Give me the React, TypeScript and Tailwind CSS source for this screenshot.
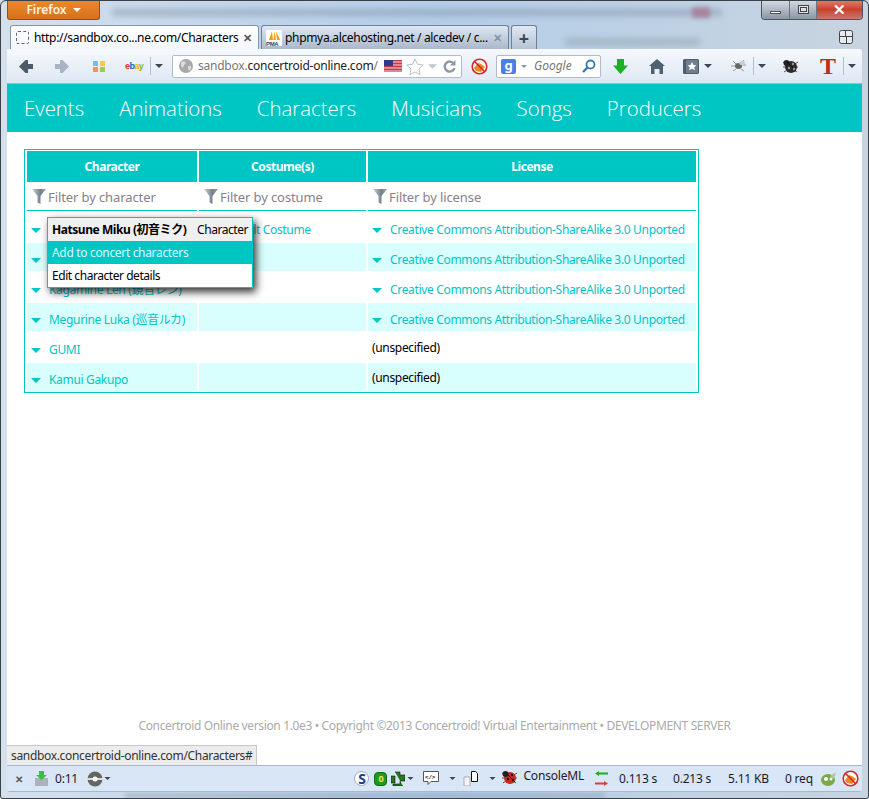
import React from "react";

const Caret = ({ c = "#3c4654", w = 9, h = 5 }: { c?: string; w?: number; h?: number }) => (
  <svg width={w} height={h} viewBox="0 0 10 5" className="shrink-0 block"><path d="M0 0h10L5 5z" fill={c} /></svg>
);

const Filter = () => (
  <svg width="14" height="15" viewBox="0 0 14 15" className="shrink-0 block">
    <defs><linearGradient id="fg" x1="0" x2="1" y1="0" y2="0"><stop offset="0" stopColor="#c9d3d8" /><stop offset="0.6" stopColor="#76808a" /><stop offset="1" stopColor="#9aa4ac" /></linearGradient></defs>
    <path d="M0 0h14L8.5 7v8l-3-1.5V7z" fill="url(#fg)" />
  </svg>
);

const Arrow = ({ c, flip }: { c: string; flip?: boolean }) => (
  <svg width="14" height="13" viewBox="0 0 14 13" className="block" style={flip ? { transform: "scaleX(-1)" } : undefined}>
    <path d="M0 6.5L6.5 0h2.500v4h5v5h-5v4H6.500z" fill={c} />
  </svg>
);

const Ladybug = ({ red }: { red?: boolean }) => (
  <svg width="17" height="15" viewBox="0 0 17 15" className="block">
    <path d="M1 3l3 2M1 8h3M2 13l3-2M16 3l-3 2M16 8h-3M15 13l-3-2" stroke="#555" strokeWidth="1" />
    <ellipse cx="9" cy="8" rx="6" ry="6" fill={red ? "#c8281e" : "#2c2c2c"} />
    <circle cx="4.500" cy="4" r="3" fill="#222" />
    <path d="M5 3l9 9" stroke="#111" strokeWidth="1" />
    <circle cx="11" cy="5" r="1.200" fill={red ? "#200" : "#999"} />
    <circle cx="7" cy="9" r="1.200" fill={red ? "#200" : "#999"} />
    <circle cx="12" cy="10" r="1.200" fill={red ? "#200" : "#999"} />
  </svg>
);

const NoScript = () => (
  <svg width="17" height="17" viewBox="0 0 17 17" className="block">
    <circle cx="8.500" cy="8.500" r="7.300" fill="#fff" stroke="#d8252b" strokeWidth="1.600" />
    <path d="M3 10l4-5 3 1 4 3-4 5-5-1z" fill="#e88b1e" />
    <path d="M3.300 3.300l10.400 10.400" stroke="#d8252b" strokeWidth="1.600" />
  </svg>
);

const Sep = () => <div className="w-px h-[18px] bg-[#b4bfcc]" />;

const rows = [
  { name: "Hatsune Miku (初音ミク)", costume: "Default Costume", license: true },
  { name: "Kagamine Rin (鏡音リン)", costume: "", license: true },
  { name: "Kagamine Len (鏡音レン)", costume: "", license: true },
  { name: "Megurine Luka (巡音ルカ)", costume: "", license: true },
  { name: "GUMI", costume: "", license: false },
  { name: "Kamui Gakupo", costume: "", license: false },
];

const font = { fontFamily: '"Noto Sans", "Noto Sans CJK JP", sans-serif' };

const tealCaret = <Caret c="#00c6c6" w={10} h={5} />;

export default function App() {
  return (
    <div
      className="relative w-[869px] h-[799px] overflow-hidden flex flex-col bg-gradient-to-r from-[#d4e0ec] via-[#b4cee9] to-[#c8d4e0] text-black"
      style={font}
    >
      {/* blurred desktop behind aero glass */}
      <div className="absolute left-[112px] top-[9px] w-[610px] h-[7px] bg-[#7d8ea6] opacity-50 blur-[3px]" />
      <div className="absolute left-[692px] top-[7px] w-[18px] h-[11px] bg-[#a4708c] opacity-70 blur-[2px]" />
      <div className="absolute left-[565px] top-[38px] w-[135px] h-[8px] bg-[#88a0a8] opacity-50 blur-[3px]" />
      <div className="absolute left-[125px] bottom-[2px] w-[480px] h-[3px] bg-[#7a8aa0] opacity-60 blur-[2px]" />
      <div className="absolute inset-0 rounded-t-[6px] rounded-b-[3px] border border-[#3a4048] pointer-events-none z-10" />

      {/* title row */}
      <div className="relative flex justify-between items-start h-[25px] pl-[7px] pr-[6px] shrink-0">
        <div className="w-[93px] h-[20px] rounded-b-[3px] border border-t-0 border-[#8a5418] bg-gradient-to-b from-[#e98b2a] to-[#d8701a] flex items-center justify-center gap-[6px] text-[12px] font-semibold text-[#fff4e4]">
          Firefox <Caret c="#fff" w={8} h={4} />
        </div>
        <div className="flex w-[102px] h-[20px] rounded-b-[4px] border border-t-0 border-[#4a5560] overflow-hidden">
          <div className="w-[28px] bg-gradient-to-b from-[#d6dde6] to-[#8c97a4] border-r border-[#6a7682] flex items-end justify-center pb-[5px]">
            <div className="w-[11px] h-[3px] bg-white border border-[#555]" />
          </div>
          <div className="w-[27px] bg-gradient-to-b from-[#d6dde6] to-[#8c97a4] border-r border-[#6a7682] flex items-center justify-center">
            <div className="w-[11px] h-[9px] border border-[#444] bg-white/60 p-[1px]"><div className="w-full h-full border border-[#444]" /></div>
          </div>
          <div className="flex-1 bg-gradient-to-b from-[#e2806c] via-[#c9402c] to-[#c4786a] flex items-center justify-center">
            <span className="text-white text-[15px] font-bold leading-none">✕</span>
          </div>
        </div>
      </div>

      {/* tabs */}
      <div className="relative flex items-end h-[24px] pl-[10px] pr-[16px] shrink-0">
        <div className="w-[249px] h-[24px] rounded-t-[3px] border border-b-0 border-[#8295ad] bg-gradient-to-b from-white to-[#f2f6fc] flex items-center pl-[5px] pr-[6px] text-[12px] tracking-[-0.32px]">
          <div className="w-[13px] h-[13px] border border-dashed border-[#666] rounded-[2px] mr-[5px] shrink-0" />
          <span className="flex-1 whitespace-nowrap">http://sandbox.co...ne.com/Characters</span>
          <span className="text-[#555] text-[11px] font-bold leading-none">✕</span>
        </div>
        <div className="ml-[2px] w-[248px] h-[24px] rounded-t-[3px] border border-b-0 border-[#6f7f94] bg-gradient-to-b from-[#dfe8f3] to-[#aab8ca] flex items-center pl-[4px] pr-[6px] text-[12px] tracking-[-0.32px]">
          <svg width="16" height="16" viewBox="0 0 16 16" className="mr-[3px] shrink-0 block">
            <rect width="16" height="16" fill="#fff" />
            <path d="M3 10L6 1l1 9zM7.500 10L8.500 1l1.500 9zM11 10L10 1l4 9z" fill="#f59a12" />
            <text x="0" y="15.500" fontSize="6" fontWeight="700" fill="#2d3f78" fontFamily="Liberation Sans">PMA</text>
          </svg>
          <span className="flex-1 whitespace-nowrap">phpmya.alcehosting.net / alcedev / c...</span>
          <span className="text-[#8492a4] text-[11px] font-bold leading-none">✕</span>
        </div>
        <div className="ml-[2px] w-[26px] h-[24px] rounded-t-[3px] border border-b-0 border-[#6f7f94] bg-gradient-to-b from-[#dfe8f3] to-[#b6c3d4] flex items-center justify-center text-[18px] leading-none font-bold text-[#3c4654]">
          +
        </div>
        <svg width="14" height="14" viewBox="0 0 14 14" className="ml-auto mb-[5px] block">
          <rect x="0.500" y="0.500" width="13" height="13" rx="2" fill="#ffffff88" stroke="#444" />
          <path d="M0.500 6.500h13M6.500 0.500v6M7.500 6.500v7" stroke="#444" />
        </svg>
      </div>

      {/* browser content frame */}
      <div className="relative flex-1 mx-[7px] mb-[7px] flex flex-col rounded-b-[3px] border-b border-[#a9b7c9] min-h-0">
        {/* toolbar */}
        <div className="h-[35px] shrink-0 rounded-tr-[3px] bg-gradient-to-b from-[#f6f9fd] to-[#dde7f3] border-b border-[#a9b7c9] flex items-center">
          <div className="ml-[12px]"><Arrow c="#4d5a68" /></div>
          <div className="ml-[22px]"><Arrow c="#a8b4c2" flip /></div>
          <div className="ml-[24px] grid grid-cols-2 gap-[1px] w-[12px]">
            <div className="w-[5px] h-[5px] bg-[#6cc0ec]" /><div className="w-[5px] h-[5px] bg-[#f2c84e]" />
            <div className="w-[5px] h-[5px] bg-[#f0945c]" /><div className="w-[5px] h-[5px] bg-[#a2c85c]" />
          </div>
          <div className="ml-[20px] w-[18px] text-[9px] font-bold leading-none tracking-[-0.6px]" style={{ fontFamily: "Liberation Sans" }}>
            <span className="text-[#e53238]">e</span><span className="text-[#0064d2]">b</span><span className="text-[#f5af02]">a</span><span className="text-[#86b817]">y</span>
          </div>
          <div className="ml-[7px]"><Sep /></div>
          <div className="ml-[4px]"><Caret w={8} h={4} /></div>
          <div className="ml-[9px] w-[290px] h-[23px] rounded-[2px] bg-white border border-[#b0bccb] flex items-center pl-[6px] pr-[3px] text-[12px] tracking-[-0.23px]">
            <svg width="14" height="14" viewBox="0 0 14 14" className="mr-[5px] shrink-0 block">
              <circle cx="7" cy="7" r="7" fill="#a9a9a9" />
              <path d="M2 3l3-1 2 2-2 2-1 3-2-2zM9 7l3 0 0 3-2 2-1-3z" fill="#dcdcdc" />
            </svg>
            <span className="text-[#777] whitespace-nowrap">sandbox.</span>
            <span className="whitespace-nowrap text-[#222]">concertroid-online.com</span>
            <span className="text-[#777]">/</span>
            <svg width="18" height="12" viewBox="0 0 18 12" className="ml-[6px] shrink-0 block">
              <rect width="18" height="12" fill="#c63a4a" />
              <path d="M0 2h18M0 5h18M0 8h18M0 11h18" stroke="#f6d8dc" />
              <rect width="9" height="6" fill="#2c3a90" />
            </svg>
            <svg width="18" height="17" viewBox="0 0 18 17" className="ml-[4px] shrink-0 block">
              <path d="M9 1l2.500 5.300 5.700.7-4.200 4 1.100 5.700L9 14l-5.100 2.700L5 11 .8 7l5.700-.7z" fill="#fff" stroke="#b8c0c8" />
            </svg>
            <div className="ml-[4px]"><Caret c="#c2c8d0" w={9} h={5} /></div>
            <svg width="15" height="15" viewBox="0 0 15 15" className="ml-[5px] shrink-0 block">
              <path d="M12 5a5 5 0 1 0 .5 4" fill="none" stroke="#8c98a4" strokeWidth="2.400" />
              <path d="M13.500 1v5.500H8z" fill="#8c98a4" />
            </svg>
          </div>
          <div className="ml-[9px]"><NoScript /></div>
          <div className="ml-[8px] w-[105px] h-[23px] rounded-[2px] bg-white border border-[#b0bccb] flex items-center px-[4px]">
            <div className="w-[15px] h-[15px] rounded-[2px] bg-[#4a7fe8] text-white text-[13px] leading-[13px] text-center font-bold shrink-0">g</div>
            <div className="ml-[5px]"><Caret c="#8a96a4" w={6} h={3} /></div>
            <span className="ml-[7px] italic text-[12px] text-[#777] flex-1">Google</span>
            <svg width="14" height="14" viewBox="0 0 14 14" className="block shrink-0">
              <circle cx="8.500" cy="5.500" r="4" fill="none" stroke="#3c78b0" strokeWidth="1.800" />
              <path d="M5.500 8.500L1 13" stroke="#3c78b0" strokeWidth="2.400" />
            </svg>
          </div>
          <svg width="15" height="15" viewBox="0 0 15 15" className="ml-[12px] block shrink-0">
            <path d="M4 0h7v6.500h4L7.500 15 0 6.500h4z" fill="#1cb024" />
          </svg>
          <svg width="16" height="15" viewBox="0 0 16 15" className="ml-[21px] block shrink-0">
            <path d="M8 0l8 7h-2v8h-3.500v-5h-5v5H2V7H0z" fill="#4f6070" />
          </svg>
          <svg width="16" height="15" viewBox="0 0 16 15" className="ml-[18px] block shrink-0">
            <rect width="16" height="15" rx="1.500" fill="#4f5c6c" />
            <rect x="3" y="1" width="12" height="13" fill="#6f7d8c" />
            <path d="M9 3l1.500 3 3 .3-2.300 2 .7 3L9 9.800 6.100 11.300l.7-3-2.300-2 3-.3z" fill="#fff" />
          </svg>
          <div className="ml-[5px]"><Caret w={8} h={4} /></div>
          <svg width="17" height="14" viewBox="0 0 17 14" className="ml-[18px] block shrink-0">
            <path d="M3 2l3 3M1 7h4M3 12l3-2M14 1l-3 4M16 6h-4M14 12l-3-2" stroke="#999" />
            <ellipse cx="8.500" cy="7" rx="3.500" ry="3" fill="#666" />
            <ellipse cx="12" cy="4" rx="3" ry="2" fill="#ccc" />
          </svg>
          <div className="ml-[6px]"><Sep /></div>
          <div className="ml-[4px]"><Caret w={8} h={4} /></div>
          <div className="ml-[16px]"><Ladybug /></div>
          <span className="ml-[21px] w-[16px] text-[24px] leading-none font-bold text-[#c42a18] text-center" style={{ fontFamily: "Liberation Serif" }}>T</span>
          <div className="ml-[7px]"><Sep /></div>
          <div className="ml-[4px]"><Caret w={8} h={4} /></div>
        </div>

        {/* page */}
        <div className="relative flex-1 min-h-0 bg-white flex flex-col">
          <nav className="h-[48px] pt-[1px] shrink-0 bg-[#00c6c3] flex items-center pl-[17px] gap-[35px] text-white text-[20.4px] font-light" style={{ fontFamily: '"Open Sans", sans-serif' }}>
            {["Events", "Animations", "Characters", "Musicians", "Songs", "Producers"].map((n) => (
              <span key={n}>{n}</span>
            ))}
          </nav>

          <div className="ml-[17px] mt-[17px] w-[675px] border border-[#00c6c3] p-[1px] pl-[2px] text-[12px] tracking-[-0.33px]">
            <div className="grid grid-cols-[170px_167px_328px] gap-x-[2px]">
              {["Character", "Costume(s)", "License"].map((h) => (
                <div key={h} className="h-[31px] pt-[1px] bg-[#00c6c3] text-white font-bold tracking-[-0.45px] flex items-center justify-center">{h}</div>
              ))}
              {["Filter by character", "Filter by costume", "Filter by license"].map((f) => (
                <div key={f} className="h-[29px] border-b border-[#00c6c3] flex items-center pl-[5px] gap-[2px] text-[13px] tracking-[-0.1px] text-[#8a8088]">
                  <Filter />
                  <span className="pt-[3px]">{f}</span>
                </div>
              ))}
              {rows.map((r, i) => {
                const alt = i % 2 === 1;
                const cell = `flex items-center pt-[6px] ${alt ? "h-[28px] bg-[#d9fefe]" : "h-[32px]"}`;
                return (
                  <React.Fragment key={r.name}>
                    <div className={`${cell} pl-[4px] gap-[8px] text-[#00c6c3]`}>{tealCaret}<span>{r.name}</span></div>
                    <div className={`${cell} pl-[4px] gap-[8px] text-[#00c6c3]`}>
                      {r.costume && <>{tealCaret}<span>{r.costume}</span></>}
                    </div>
                    {r.license ? (
                      <div className={`${cell} pl-[4px] gap-[8px] text-[#00c6c3]`}>{tealCaret}<span className="whitespace-nowrap">Creative Commons Attribution-ShareAlike 3.0 Unported</span></div>
                    ) : (
                      <div className={`${cell} pl-[4px]`}><span className="-mt-[4px]">(unspecified)</span></div>
                    )}
                  </React.Fragment>
                );
              })}
            </div>
          </div>

          {/* context menu */}
          <div className="absolute left-[40px] top-[133px] w-[206px] border border-[#00c6c3] bg-white text-[12px] tracking-[-0.33px] shadow-[3px_4px_8px_rgba(0,0,0,0.8)]">
            <div className="h-[23px] bg-[#f0f0f0] flex items-center justify-between pl-[4px] pr-[4px]">
              <span className="font-bold whitespace-nowrap tracking-[-0.45px]">Hatsune Miku (初音ミク)</span>
              <span className="tracking-[-0.45px]">Character</span>
            </div>
            <div className="h-[23px] bg-[#00c6c3] text-[#d9fefe] flex items-center pl-[4px]">Add to concert characters</div>
            <div className="h-[23px] flex items-center pl-[4px] tracking-[-0.45px]">Edit character details</div>
          </div>

          <div className="mt-auto pb-[30px] text-center text-[12px] tracking-[-0.36px] text-[#aaaaaa] whitespace-nowrap">
            Concertroid Online version 1.0e3 • Copyright ©2013 Concertroid! Virtual Entertainment • DEVELOPMENT SERVER
          </div>

          <div className="absolute left-0 bottom-0 h-[20px] w-[250px] bg-[#ececec] border-t border-r border-[#c4c8cc] flex items-center pl-[4px] text-[12px] tracking-[-0.33px] text-[#333] whitespace-nowrap">
            sandbox.concertroid-online.com/Characters#
          </div>
        </div>

        {/* status bar */}
        <div className="h-[26px] shrink-0 bg-[#d9e6f5] border-t border-[#a9b7c9] flex items-center text-[12px] tracking-[-0.2px] text-[#1a1a2a]">
          <span className="ml-[8px] w-[9px] text-[10px] font-bold text-[#555] leading-none">✕</span>
          <svg width="15" height="15" viewBox="0 0 15 15" className="ml-[10px] block shrink-0">
            <path d="M1 7h13v8H1z" fill="#aab2bc" />
            <path d="M5 0h5v4h3L7.500 9 2 4h3z" fill="#38c040" />
          </svg>
          <span className="ml-[6px]">0:11</span>
          <svg width="16" height="16" viewBox="0 0 16 16" className="ml-[9px] block shrink-0">
            <circle cx="8" cy="8" r="7.500" fill="#666" />
            <path d="M0 8h16" stroke="#ddd" strokeWidth="2" />
            <circle cx="8" cy="8" r="2.500" fill="#fff" />
          </svg>
          <div className="ml-[1px]"><Caret w={7} h={3} /></div>
          <div className="ml-auto flex items-center">
            <div className="w-[15px] h-[15px] rounded-full bg-white border border-[#9ab] flex items-center justify-center text-[14px] font-bold text-[#1a3c8c] leading-none">S</div>
            <div className="ml-[5px] w-[13px] h-[14px] rounded-[4px] bg-[#1a9a1e] border border-[#0e6e12] text-[9px] leading-[12px] text-center text-[#e8e868] font-bold">0</div>
            <svg width="14" height="15" viewBox="0 0 14 15" className="ml-[4px] block shrink-0">
              <path d="M4 1h5v3h5v6H9v3H2v2h10M0 5h4v7H0z" fill="#267a1e" stroke="#111" strokeWidth="0.600" />
            </svg>
            <div className="ml-[2px]"><Caret w={7} h={3} /></div>
            <svg width="16" height="15" viewBox="0 0 16 15" className="ml-[9px] block shrink-0">
              <path d="M.5.5h15v10H8l-3 3v-3H.5z" fill="#fff" stroke="#555" />
              <text x="2" y="8" fontSize="6" fontWeight="700" fill="#222" fontFamily="Liberation Mono">&lt;/&gt;</text>
            </svg>
            <div className="ml-[10px]"><Caret w={7} h={3} /></div>
            <svg width="15" height="15" viewBox="0 0 15 15" className="ml-[7px] block shrink-0">
              <path d="M1 6h6v9H1z" fill="#f4f4f4" stroke="#aab" />
              <path d="M8.500 .5h4l2 2v8h-6z" fill="#fff" stroke="#111" />
            </svg>
            <div className="ml-[11px]"><Caret w={7} h={3} /></div>
            <div className="ml-[5px] -mt-[3px]"><Ladybug red /></div>
            <span className="ml-[5px] -mt-[5px]">ConsoleML</span>
            <div className="ml-[11px] flex flex-col gap-[5px]">
              <svg width="13" height="5" viewBox="0 0 13 5" className="block"><path d="M0 2.500L4 0v1.500h9v2H4V5z" fill="#16b01c" /></svg>
              <svg width="13" height="5" viewBox="0 0 13 5" className="block"><path d="M13 2.500L9 0v1.500H0v2h9V5z" fill="#e83838" /></svg>
            </div>
            <span className="ml-[11px] w-[54px]">0.113 s</span>
            <span className="w-[55px]">0.213 s</span>
            <span className="w-[57px]">5.11 KB</span>
            <span className="w-[36px]">0 req</span>
            <svg width="16" height="14" viewBox="0 0 16 14" className="block shrink-0">
              <ellipse cx="7" cy="8" rx="7" ry="6" fill="#7aa848" />
              <path d="M9 4l6-4-2 7z" fill="#b0c8a0" />
              <circle cx="5" cy="7" r="2" fill="#fff" />
              <circle cx="10" cy="7" r="1.500" fill="#fff" />
            </svg>
            <div className="ml-[5px] mr-[3px]"><NoScript /></div>
          </div>
        </div>
      </div>
    </div>
  );
}
